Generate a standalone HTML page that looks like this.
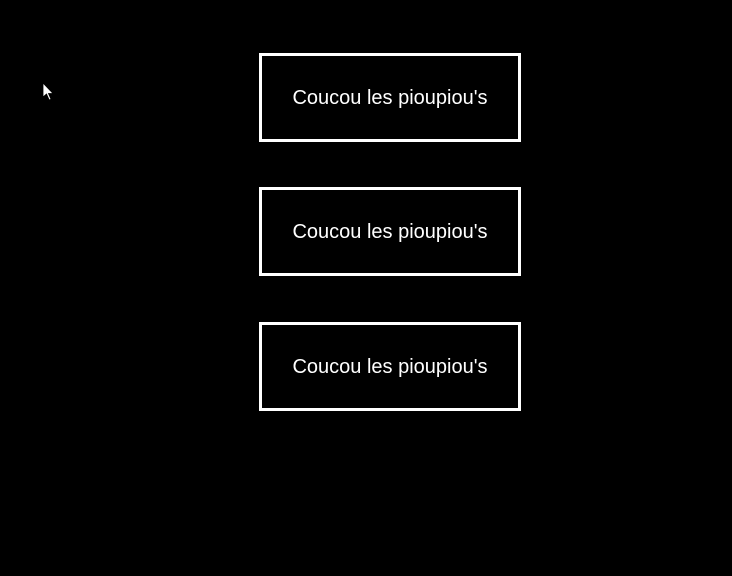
<!DOCTYPE html>
<html><head><meta charset="utf-8"><style>
html,body{margin:0;padding:0;background:#000;width:732px;height:576px;overflow:hidden;position:relative}
.b{position:absolute;left:259px;width:256px;height:83px;border:3px solid #fff;color:#fff;
font-family:"Liberation Sans",sans-serif;font-size:20px;display:flex;align-items:center;justify-content:center;box-sizing:content-box;padding-top:1px;height:82px}
</style></head><body>
<svg style="position:absolute;left:42px;top:82px" width="14" height="20" viewBox="0 0 14 20">
<path d="M1 1 L1 15 L4.5 12 L7.2 18 L9 17.2 L6.5 11.5 L11 11.5 Z" fill="#fff" stroke="#000" stroke-width="0.8"/>
</svg>
<div class="b" style="top:53px">Coucou les pioupiou's</div>
<div class="b" style="top:187px">Coucou les pioupiou's</div>
<div class="b" style="top:322px">Coucou les pioupiou's</div>
</body></html>
